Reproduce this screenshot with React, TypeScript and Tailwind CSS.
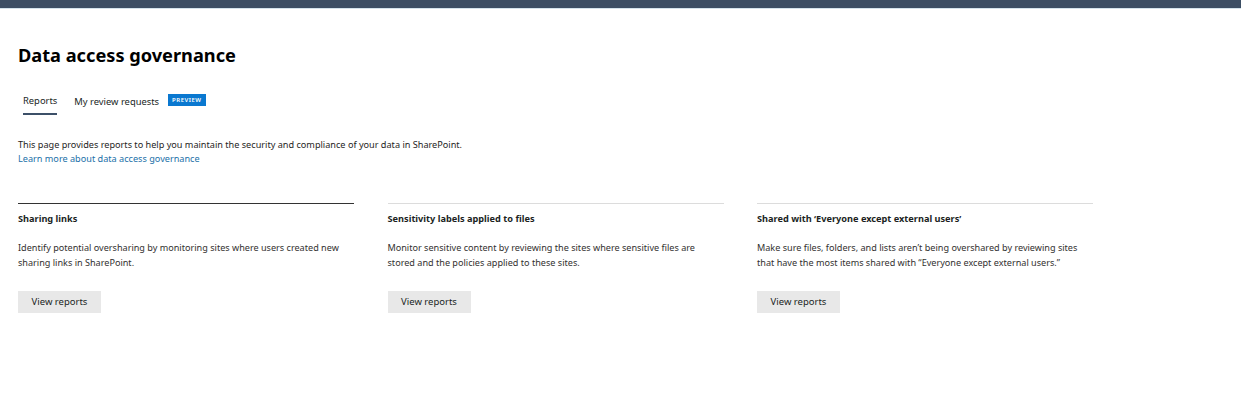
import React from "react";

const cards = [
  {
    title: "Sharing links",
    desc: "Identify potential oversharing by monitoring sites where users created new sharing links in SharePoint.",
    active: true,
  },
  {
    title: "Sensitivity labels applied to files",
    desc: "Monitor sensitive content by reviewing the sites where sensitive files are stored and the policies applied to these sites.",
    active: false,
  },
  {
    title: "Shared with \u2018Everyone except external users\u2019",
    desc: "Make sure files, folders, and lists aren\u2019t being overshared by reviewing sites that have the most items shared with \u201cEveryone except external users.\u201d",
    active: false,
  },
];

export default function App() {
  return (
    <div
      className="w-[1241px] h-[394px] bg-white text-[#201f1e] overflow-hidden"
      style={{ fontFamily: '"Noto Sans", "Open Sans", sans-serif' }}
    >
      <div className="h-[9px] bg-[#3c4e64] border-b border-[#d3e3ec]" />
      <div className="px-[18px]">
        <h1 className="mt-[33px] text-[18.2px] leading-[26px] font-bold text-black">
          Data access governance
        </h1>
        <div className="mt-[26px] flex items-start">
          <div className="ml-[5px] flex flex-col">
            <span className="text-[9.4px] leading-[14px]">Reports</span>
            <div className="mt-[5px] h-[2px] bg-[#3c5068]" />
          </div>
          <span className="ml-[17px] text-[9.4px] leading-[14px] pt-[1px]">
            My review requests
          </span>
          <span className="ml-[9px] h-[12px] px-[4px] bg-[#0a78d0] text-white text-[6px] leading-[12px] font-semibold tracking-[0.5px]">
            PREVIEW
          </span>
        </div>
        <p className="mt-[23px] text-[9.15px] leading-[14px] text-[#252423]">
          This page provides reports to help you maintain the security and compliance of your data in SharePoint.
        </p>
        <a className="block text-[9.15px] leading-[14px] text-[#1a6fa8]">
          Learn more about data access governance
        </a>
        <div className="mt-[37px] flex gap-[33.5px]">
          {cards.map((c) => (
            <div key={c.title} className="w-[336px]">
              <div className={c.active ? "h-[1px] bg-[#333333]" : "h-[1px] bg-[#dcdcdc]"} />
              <div className="mt-[8px] text-[9.2px] leading-[14px] font-bold">{c.title}</div>
              <p className="mt-[14px] text-[9.1px] leading-[15px] text-[#323130]">{c.desc}</p>
              <button className="mt-[21px] h-[22px] w-[83px] bg-[#e8e8e8] text-[9.5px] text-[#201f1e]">
                View reports
              </button>
            </div>
          ))}
        </div>
      </div>
    </div>
  );
}
